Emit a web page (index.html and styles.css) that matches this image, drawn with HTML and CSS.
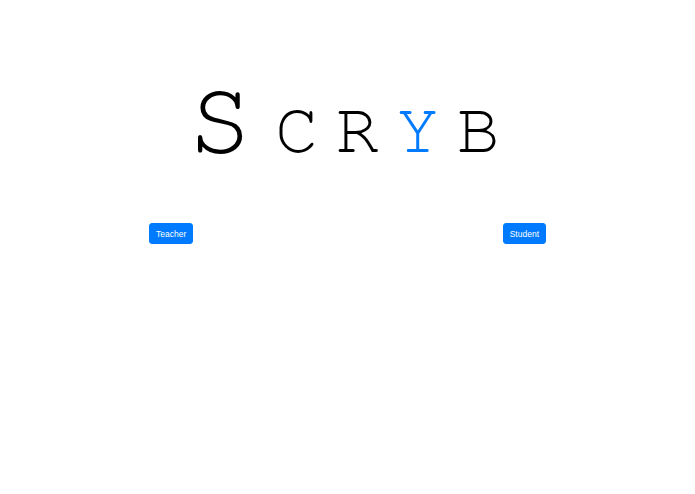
FILE: index.html
```html
<!DOCTYPE html>
<html>
<head>
<meta charset="utf-8">
<link rel="stylesheet" href="styles.css">
</head>
<body>
<main class="page">
  <h1 class="logo"><span class="big">S</span><span class="rest">CR<span class="blue">Y</span>B</span></h1>
  <div class="roles">
    <button class="btn">Teacher</button>
    <button class="btn">Student</button>
  </div>
</main>
</body>
</html>
```
FILE: styles.css
```css
html, body {
  margin: 0;
  padding: 0;
  background: #fff;
}
.page {
  width: 695px;
  height: 494px;
  font-family: "Liberation Sans", Arial, sans-serif;
}
.logo {
  margin: 0;
  padding: 70px 7px 0 0;
  font-family: "FreeMono", "Liberation Mono", monospace;
  font-weight: normal;
  color: #000;
  text-align: center;
  line-height: 100px;
  height: 100px;
  white-space: nowrap;
}
.big {
  font-size: 106px;
  margin-right: 23px;
}
.rest {
  font-size: 72px;
  letter-spacing: 17.3px;
  margin-right: -17.3px;
}
.blue {
  color: #007bff;
}
.roles {
  display: flex;
  justify-content: space-between;
  padding: 53px 149px 0 149px;
}
.btn {
  background: #007bff;
  color: #fff;
  border: 1px solid #007bff;
  border-radius: 3px;
  font-family: "Liberation Sans", Arial, sans-serif;
  font-size: 8.5px;
  line-height: 11px;
  padding: 5px 6px 3px;
  margin: 0;
  cursor: pointer;
}
```
